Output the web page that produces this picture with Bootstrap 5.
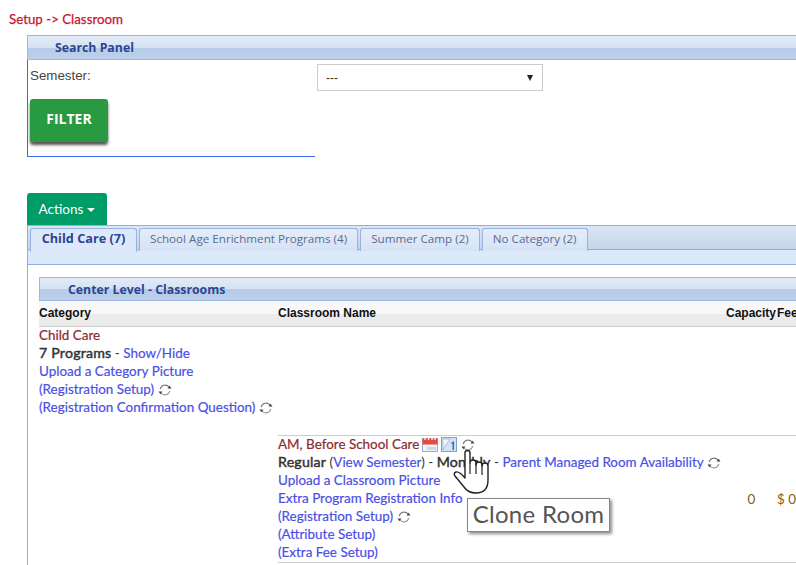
<!DOCTYPE html>
<html lang="en">
<head>
<meta charset="utf-8">
<title>Setup - Classroom</title>
<link href="https://cdn.jsdelivr.net/npm/bootstrap@5.3.0/dist/css/bootstrap.min.css" rel="stylesheet">
<style>
html,body{height:565px;overflow:hidden;background:#fff}
body{font-family:Lato,sans-serif;font-size:13.44px;line-height:18px;color:#333;width:796px;position:relative}
a{text-decoration:none;color:#4a50e6;-webkit-text-stroke:.2px #4a50e6}
.crumb{padding:10px 9px 7px;height:35px;color:#c8132f;font-size:13.3px;font-weight:400;-webkit-text-stroke:.25px #c8132f;line-height:18px}
.wrap{margin-left:27px}
.hdr{height:25px;border:1px solid #9cb7e3;border-right:0;background:linear-gradient(#e2ecf8 0,#d5e2f3 50%,#b6cbe9 52%,#bdd0ea 100%);font-family:"Open Sans",sans-serif;font-weight:700;font-size:12.3px;line-height:23px;color:#2c4590;padding-left:27px}
.search-body{width:288px;height:97px;border-left:1px solid #3a68f0;border-bottom:1px solid #3a68f0}
.sem-row{display:flex;height:39px;width:516px}
.sem-label{width:289px;padding:7px 0 0 2px;font-family:"Liberation Sans",sans-serif;font-size:13.33px;color:#444}
.sem-select{flex:none;width:226px;height:27px;margin-top:4px;border:1px solid #ccc;background:#fff;font-family:"Liberation Sans",sans-serif;font-size:12px;line-height:26px;padding-left:8px;color:#333;position:relative}
.sem-select::after{content:"";position:absolute;right:9px;top:10px;border:3.5px solid transparent;border-top:6px solid #222;border-bottom:0}
.btn-filter{display:block;width:78px;height:43px;margin-left:2px;padding:0 0 4px;background:#289a41;border:0;border-radius:3px;color:#fff;font-family:"Open Sans",sans-serif;font-weight:700;font-size:14px;box-shadow:0 3px 3px #555}
.btn-filter:hover{background:#289a41;color:#fff}
.btn-actions{display:block;margin-top:36px;width:80px;height:32px;padding:0;border:0;border-radius:3px 3px 0 0;background:#009c68;color:#fff;font-size:13.5px}
.btn-actions:hover{background:#009c68;color:#fff}
.caret-down{display:inline-block;margin-left:4px;vertical-align:2px;border:4px solid transparent;border-top-color:#fff;border-bottom:0}
.tabpanel{border-left:1px solid #90aee0;height:340px;overflow:hidden}
.tabstrip{height:25px;display:flex;gap:2px;padding:2px 0 0 2px;background:linear-gradient(#dbe6f6,#c5d4e9);border-top:1px solid #8fb0e3;border-bottom:1px solid #8fb0e3}
.tabx{height:23px;border:1px solid #96b3e2;border-bottom:0;border-radius:3px 3px 0 0;background:linear-gradient(#e4edf9,#d6e3f5);font-family:"Open Sans",sans-serif;font-size:11.65px;line-height:19px;padding:0 10px;color:#5b6a8f;white-space:nowrap}
.tabx.on{width:107px;height:24px;background:#dde9fb;font-weight:700;font-size:12.7px;color:#2c4590;padding:0;text-align:center}
.tabfoot{height:15px;background:#dce9fb;border-bottom:1px solid #8fb0e3}
.inner{margin:12px 0 0 11px;width:758px}
.inner .hdr{height:24px;border-left:1px solid #9cb7e3;padding-left:28px;line-height:23px}
.tbl{table-layout:fixed;width:760px;border-collapse:collapse;margin:0}
.tbl th{height:25px;padding:0;background:linear-gradient(#f8f8f8 0,#f8f8f8 50%,#ebebeb 52%,#ebebeb 100%);border-bottom:1px solid #ccc;font-family:"Liberation Sans",sans-serif;font-size:12px;font-weight:700;color:#111;vertical-align:middle}
.tbl td{padding:0;vertical-align:top;line-height:18px}
.row-cat td{padding:0 0 19px 0}
.lines-up{margin-top:-1px}
.row-room td{border-top:1px solid #ccc;border-bottom:1px solid #ccc;padding:0}
.row-room td.blank{border:0}
.row-room td.mid{vertical-align:middle;color:#8a5a10}
.title-red{color:#8d2a2e;-webkit-text-stroke:.2px #8d2a2e}
.strong{color:#333;font-size:14.2px;letter-spacing:.2px;-webkit-text-stroke:.45px #333}
.ico{display:inline-block;vertical-align:-3px}
.ico-first{margin-left:-1px}
.pad-room{height:127px}
.tip{position:absolute;left:467px;top:498px;width:143px;height:34px;background:#fff;border:1px solid #888;box-shadow:2px 2px 3px rgba(0,0,0,.45);font-family:Lato,sans-serif;font-size:24px;line-height:30px;text-align:center;color:#555;letter-spacing:.3px}
.hand{position:absolute;left:450px;top:445px}
</style>
</head>
<body>
<svg width="0" height="0" class="position-absolute">
<symbol id="sync" viewBox="0 0 14 14">
<path d="M2.2 6.2A5 5 0 0 1 11 4" fill="none" stroke="#777" stroke-width="1.1"/>
<path d="M11.8 7.8A5 5 0 0 1 3 10" fill="none" stroke="#999" stroke-width="1.1"/>
<path d="M9.5 5.4h4l-2-2.600z" fill="#444"/>
<path d="M.5 8.600h4l-2 2.600z" fill="#444"/>
</symbol>
</svg>

<div class="crumb">Setup -&gt; Classroom</div>
<div class="wrap">
  <div class="hdr">Search Panel</div>
  <div class="search-body">
    <div class="sem-row">
      <div class="sem-label">Semester:</div>
      <div class="sem-select">---</div>
    </div>
    <button type="button" class="btn btn-filter">FILTER</button>
  </div>
  <button type="button" class="btn btn-actions">Actions<span class="caret-down"></span></button>
  <div class="tabpanel">
    <div class="tabstrip">
      <div class="tabx on">Child Care (7)</div>
      <div class="tabx">School Age Enrichment Programs (4)</div>
      <div class="tabx">Summer Camp (2)</div>
      <div class="tabx">No Category (2)</div>
    </div>
    <div class="tabfoot"></div>
    <div class="inner">
      <div class="hdr">Center Level - Classrooms</div>
      <table class="tbl">
        <colgroup><col style="width:239px"><col style="width:448px"><col style="width:51px"><col></colgroup>
        <thead><tr><th>Category</th><th>Classroom Name</th><th>Capacity</th><th>Fee</th></tr></thead>
        <tbody>
          <tr class="row-cat">
            <td colspan="4">
              <div class="lines-up">
              <div class="title-red">Child Care</div>
              <div><span class="strong">7 Programs</span> - <a href="#">Show/Hide</a></div>
              <div><a href="#">Upload a Category Picture</a></div>
              <div><a href="#">(Registration Setup)</a> <svg class="ico" width="14" height="14"><use href="#sync"/></svg></div>
              <div><a href="#">(Registration Confirmation Question)</a> <svg class="ico" width="14" height="14"><use href="#sync"/></svg></div>
              </div>
            </td>
          </tr>
          <tr class="row-room">
            <td class="blank"></td>
            <td>
              <div class="pad-room">
              <div class="lines-up">
              <div class="title-red">AM, Before School Care
                <svg class="ico ico-first" width="16" height="15" viewBox="0 0 16 15"><rect x=".5" y="1.500" width="15" height="13" fill="#eef3fa" stroke="#9ab"/><rect x=".5" y="1.500" width="15" height="6" fill="#e8483f"/><path d="M3 0v3M6.500 0v3M10 0v3M13 0v3" stroke="#fff" stroke-width="1.200"/><rect x="5" y="10" width="9" height="3" fill="#c9d8ec"/></svg>
                <svg class="ico" width="16" height="15" viewBox="0 0 16 15"><rect x=".5" y=".5" width="15" height="14" fill="#d3e3f5" stroke="#7fa3cf"/><path d="M1.500 13 9 2H2v11z" fill="#f3f7fc" stroke="#8aa5c5" stroke-width=".6"/><path d="M10.500 6.500l1.800-1.200V13" fill="none" stroke="#3b6ea8" stroke-width="1.500"/></svg>
                <svg class="ico" width="14" height="14"><use href="#sync"/></svg>
              </div>
              <div><span class="strong">Regular</span> (<a href="#">View Semester</a>) - <span class="strong">Monthly</span> - <a href="#">Parent Managed Room Availability</a> <svg class="ico" width="14" height="14"><use href="#sync"/></svg></div>
              <div><a href="#">Upload a Classroom Picture</a></div>
              <div><a href="#">Extra Program Registration Info</a></div>
              <div><a href="#">(Registration Setup)</a> <svg class="ico" width="14" height="14"><use href="#sync"/></svg></div>
              <div><a href="#">(Attribute Setup)</a></div>
              <div><a href="#">(Extra Fee Setup)</a></div>
              </div>
              </div>
            </td>
            <td class="mid text-center">0</td>
            <td class="mid">$ 0</td>
          </tr>
        </tbody>
      </table>
    </div>
  </div>
</div>

<svg class="hand" width="42" height="52" viewBox="0 0 42 52">
<path d="M15 27V8a2.500 2.500 0 0 1 5 0V18a3 3 0 0 1 6 0V20a3 3 0 0 1 6 0V21a3 3 0 0 1 6 0V35Q38 48 26 48Q18 48 14 42L5 31Q3 28 6 27Q9 26 15 33z" fill="#fff" stroke="#222" stroke-width="1.400" stroke-linejoin="round"/>
<path d="M20 18v11M26 18v11M32 20v10" stroke="#222" stroke-width="1.200" fill="none"/>
</svg>
<div class="tip">Clone Room</div>
<script src="https://cdn.jsdelivr.net/npm/bootstrap@5.3.0/dist/js/bootstrap.bundle.min.js"></script>
</body>
</html>
